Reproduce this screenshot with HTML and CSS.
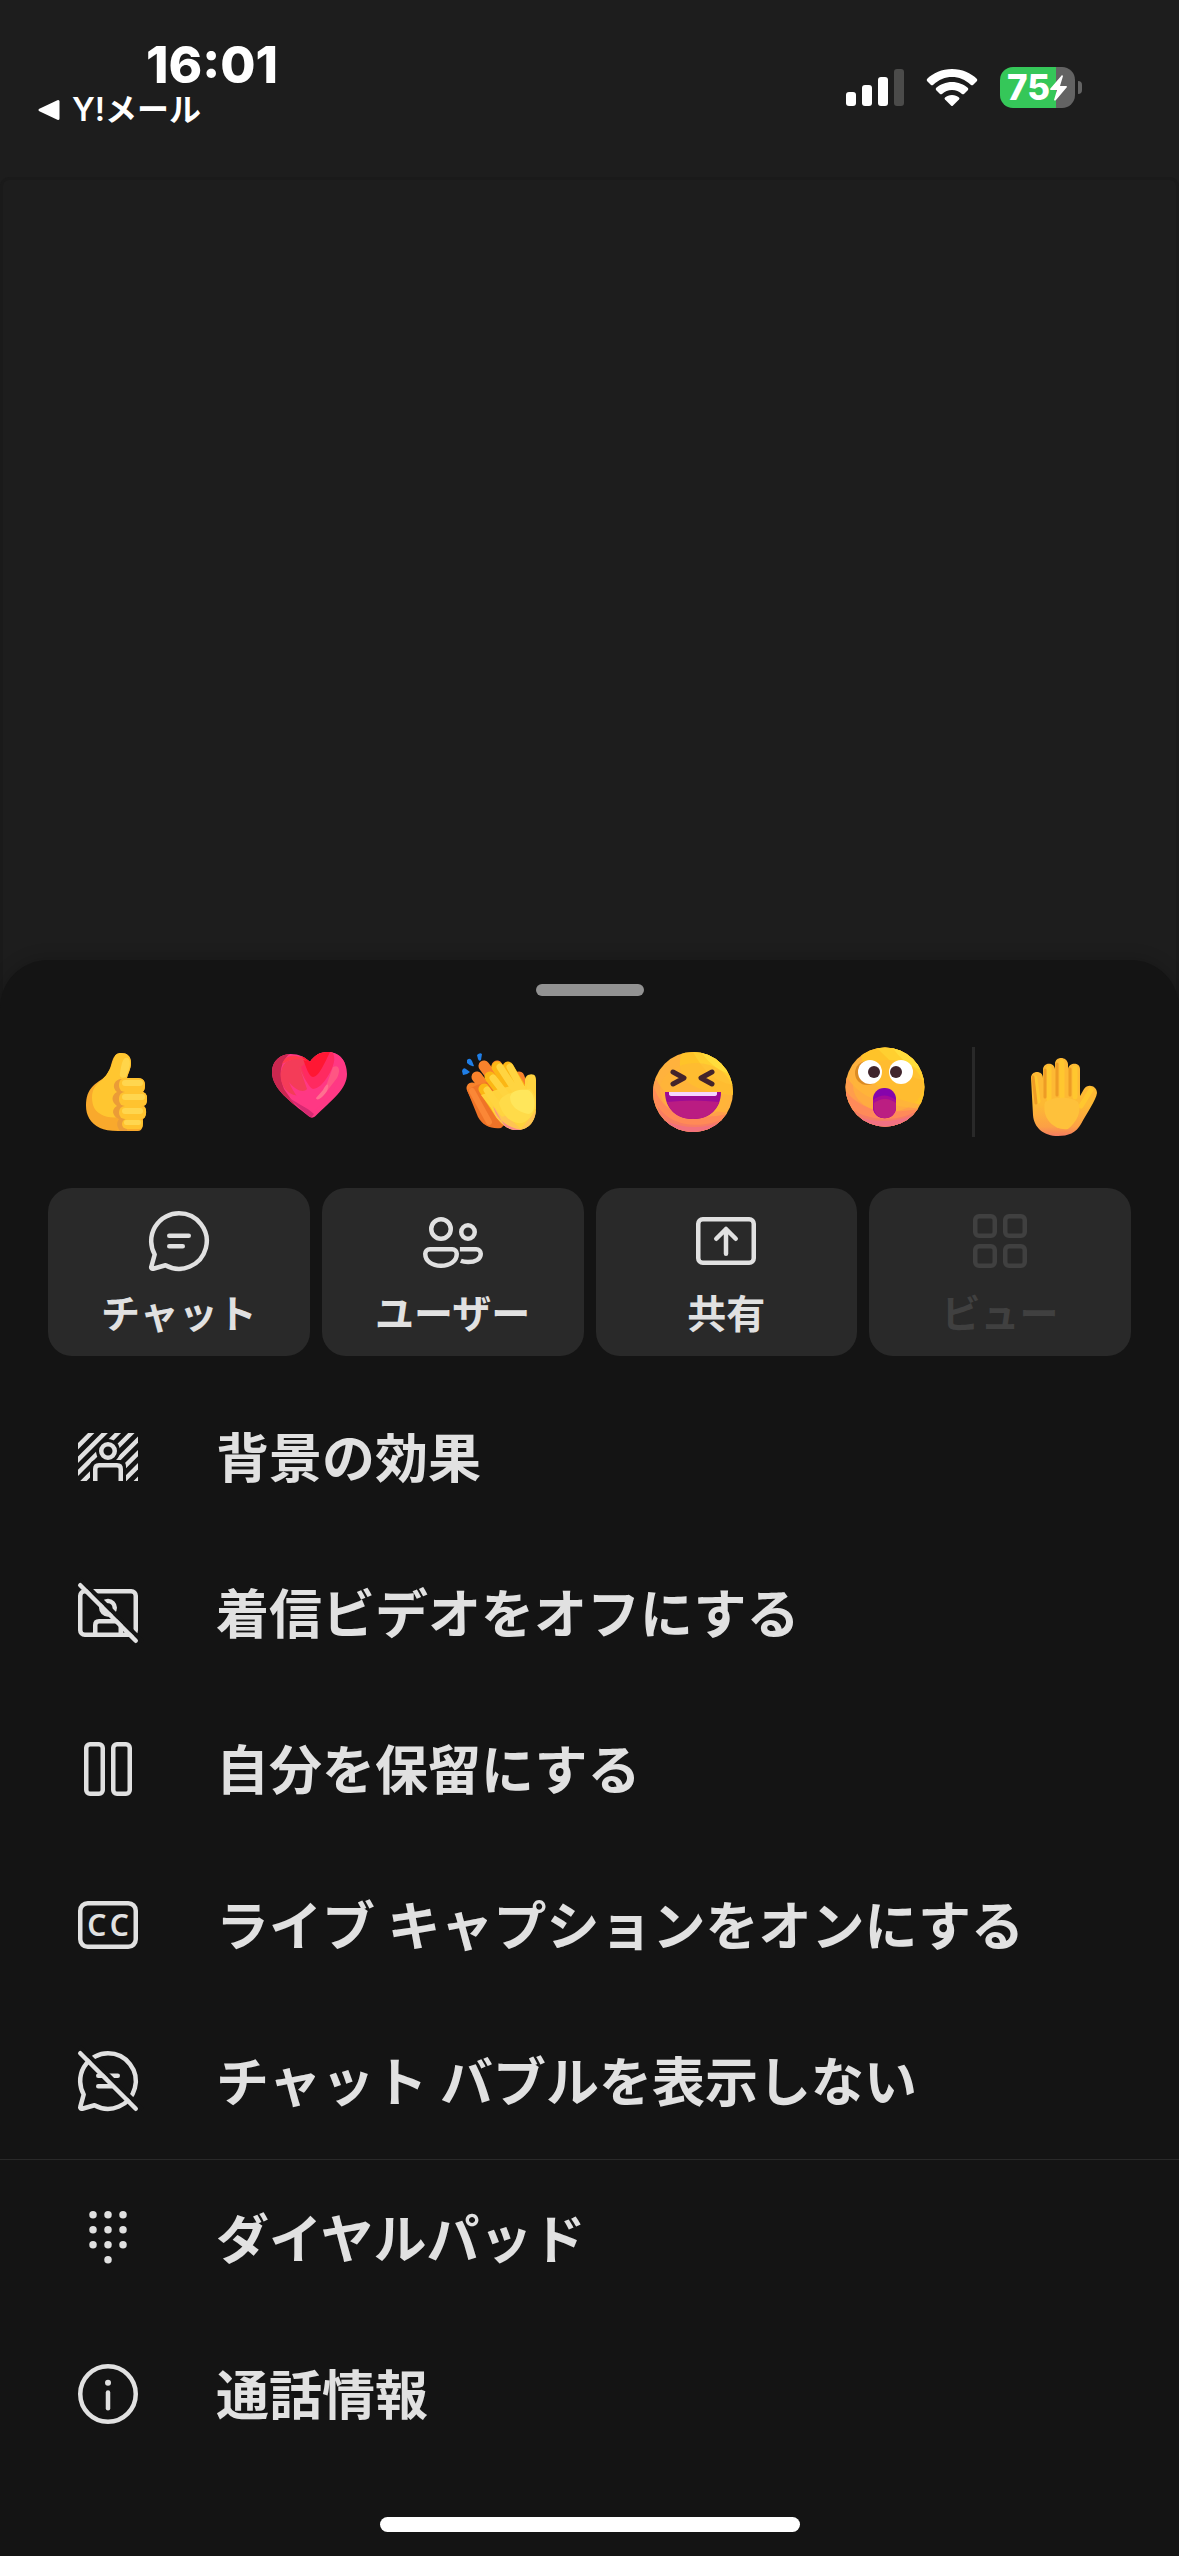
FILE: index.html
```
<!DOCTYPE html>
<html lang="ja">
<head>
    <meta charset="UTF-8">
    <meta name="viewport" content="width=device-width, initial-scale=1.0">
    <title>会議メニュー</title>
    <link rel="stylesheet" href="styles.css">
</head>
<body>
    <div class="screen">
        <header class="status-bar">
            <div class="status-left">
                <span class="time">16:01</span>
                <a href="#" class="back">
                    <svg width="22" height="22" viewBox="0 0 22 22" aria-hidden="true"><path d="M2 11 20 2.5V19.5Z" fill="#fff" stroke="#fff" stroke-width="3" stroke-linejoin="round"/></svg>
                    Y!メール
                </a>
            </div>
            <div class="status-right">
                <svg width="58" height="38" viewBox="0 0 58 38" fill="#fff" aria-hidden="true">
                    <rect y="23" width="10" height="14" rx="3"/>
                    <rect x="16" y="16" width="10" height="21" rx="3"/>
                    <rect x="32" y="8" width="10" height="29" rx="3"/>
                    <rect x="48" width="10" height="37" rx="3" fill="#4b4b4a"/>
                </svg>
                <svg width="52" height="38" viewBox="0 0 52 38" fill="#fff" aria-hidden="true">
                    <path d="M26 0C36 0 45 4 51 10Q51.5 11 51 12L47 16Q46 16.5 45 16C39 10.5 33 8 26 8S13 10.5 7 16Q6 16.5 5 16L1 12Q.5 11 1 10C7 4 16 0 26 0Z"/>
                    <path d="M26 13C32 13 38 15.5 42 19Q42.5 20 42 21L38 25Q37 25.5 36 25C33 22.5 30 21 26 21S19 22.5 16 25Q15 25.5 14 25L10 21Q9.5 20 10 19C14 15.5 20 13 26 13Z"/>
                    <path d="M26 26C29 26 31 27 33 28.5Q34 29.5 33 30.5L27 36.5Q26 37.5 25 36.5L19 30.5Q18 29.5 19 28.5C21 27 23 26 26 26Z"/>
                </svg>
                <div class="battery">
                    <span class="battery-level">75</span>
                    <svg width="17" height="26" viewBox="0 0 17 26" aria-hidden="true"><path d="M12 0 0 14Q0 15 1 15H7L4 25Q5 26 6 25L17 12Q17 11 16 11H10L13 1Z" fill="#fff"/></svg>
                </div>
            </div>
        </header>

        <main class="stage"></main>

        <section class="sheet">
            <div class="grabber"></div>

            <div class="reactions">
                <div class="reaction-list">
                    <button type="button" aria-label="いいね">
                        <svg viewBox="0 0 96 90">
                            <clipPath id="thumb"><path d="M53 6C59 6 63 9 63 16C63 22 60 26 59 31H70C75 31 77 34 77 38C77 42 76 44 75 45C78 46 79 48 79 52C79 56 78 58 76 59C79 61 79 70 75 72C75 78 75 84 70 84H50C42 84 36 83 32 81C22 76 18 68 18 59C18 50 20 44 25 39C30 34 36 32 39 27C43 21 43 17 45 12C47 8 49 6 53 6Z"/></clipPath>
                            <g clip-path="url(#thumb)">
                                <path d="M0 0H96V90H0Z" fill="#f9a92c"/>
                                <path d="M50 0H70L62 31 80 50 52 70C40 72 28 68 25 58C22 46 26 38 34 33L42 22Z" fill="#ffc630"/>
                                <path d="M52 32C45 34 44 41 49 45C43 48 43 55 49 59C43 62 44 69 51 72C48 76 49 80 52 84H59V32Z" fill="#eb9c37"/>
                                <rect x="51" y="31" width="27" height="14" rx="6" fill="#ffc32f"/>
                                <rect x="51" y="45" width="29" height="14" rx="6" fill="#ffc32f"/>
                                <rect x="51" y="59" width="28" height="13" rx="6" fill="#ffc32f"/>
                                <rect x="54" y="72" width="22" height="10" rx="5" fill="#ffc32f"/>
                                <path d="M57 11C62 9 63 16 61 22L58 30C54 32 51 30 52 26C53 20 54 13 57 11Z" fill="#ffd54a"/>
                                <rect x="54" y="33" width="21" height="6" rx="3" fill="#ffd64f"/>
                                <rect x="54" y="47" width="23" height="6" rx="3" fill="#ffd64f"/>
                                <rect x="54" y="61" width="21" height="6" rx="3" fill="#ffd64f"/>
                                <rect x="56" y="73" width="17" height="5" rx="2" fill="#ffd64f"/>
                            </g>
                        </svg>
                    </button>
                    <button type="button" aria-label="ハート">
                        <svg viewBox="0 0 96 90">
                            <clipPath id="heart"><path d="M49 15C53 9 58 5 67 5C79 5 86 15 86 27C86 42 71 53 54 69.5C52 71 50 71 48 69.5C30 55 11 42 11 25C11 14 19 7 30 7C38 7 44 10 49 15Z"/></clipPath>
                            <g clip-path="url(#heart)">
                                <path d="M0 0H96V90H0Z" fill="#ff3884"/>
                                <path d="M0 0H38C20 10 16 24 23 42L34 58 51 75 0 60Z" fill="#cc274f"/>
                                <path d="M25 15C18 22 18 33 24 42C30 49 39 50 44 47C50 44 55 44 60 38C67 30 70 16 72 5H50L38 10Z" fill="#f43c58"/>
                                <path d="M37 18C42 28 45 38 53 39C62 38 70 20 73 6L86 10 77 34C70 50 60 58 51 66C42 58 32 46 28 35C35 44 43 46 46 42C43 34 41 26 37 18Z" fill="#ff3884"/>
                                <path d="M70 4C76 9 73 19 67 29C62 37 58 41 52 42C47 40 44 31 40 20L49 13Z" fill="#ff2a60"/>
                                <path d="M41 9C45 20 48 30 52 30C58 30 64 15 69 5H54L49 13Z" fill="#ff1733"/>
                                <path d="M21 17C25 6 37 7 46 14C37 11 30 12 21 17Z" fill="#ff3b4c"/>
                                <path d="M72 20C78 17 80 23 76 31L66 44C62 47 62 43 65 39Z" fill="#ff5683"/>
                                <path d="M62 43C66 35 69 36 66 44C62 50 56 55 55 51Z" fill="#ff7090"/>
                                <path d="M25 49C32 54 47 61 53 67L50 71Z" fill="#d62a72"/>
                            </g>
                        </svg>
                    </button>
                    <button type="button" aria-label="拍手">
                        <svg viewBox="0 0 96 90">
                            <path d="M24 8Q27 5 29 7L28 13Q26 15 25 12ZM14 13Q17 10 19 14L21 19Q18 20 14 16ZM9 24Q10 20 13 22L17 25Q14 28 10 28Z" fill="#1f7ee6"/>
                            <path d="M31 19 45 38M44 19 58 40M24 30 42 54M19 41 34 72M66 30 71 44" stroke="#f9822b" stroke-width="11" stroke-linecap="round"/>
                            <path d="M14 43 25 70C30 79 38 82 48 81L60 70 38 34 24 38Z" fill="#ef7327"/>
                            <path d="M19 44 36 75" stroke="#fb8736" stroke-width="6" stroke-linecap="round"/>
                            <path d="M31 42 48 68M37 30 56 55M44 20 61 46M55 20 68 42" stroke="#fbb614" stroke-width="11" stroke-linecap="round"/>
                            <clipPath id="clap"><path d="M72 39V32C74 25 83 27 83 33V61C83 76 74 83 64 83C52 83 44 73 38 61L28 48 46 42 62 38Z"/></clipPath>
                            <g clip-path="url(#clap)">
                                <path d="M0 0H96V90H0Z" fill="#ffd23c"/>
                                <path d="M42 58 68 82 84 62V90H40Z" fill="#ffc452"/>
                                <path d="M40 59C45 77 60 82 71 83L58 90Z" fill="#f98c8b"/>
                            </g>
                            <path d="M34 43 50 66M40 31 60 57M47 20 64 46M57 20 69 42M79 31 76 50" stroke="#ffd440" stroke-width="7" stroke-linecap="round"/>
                            <path d="M46 56C48 46 64 44 77 42C87 50 83 72 69 76C59 78 49 68 46 56Z" fill="#ffdb49"/>
                            <path d="M57 50C58 43 69 42 75 43C83 46 84 67 75 67C65 65 57 59 57 50Z" fill="#ffe65b"/>
                        </svg>
                    </button>
                    <button type="button" aria-label="笑い">
                        <svg viewBox="0 0 96 90">
                            <clipPath id="laugh"><circle cx="47" cy="45" r="40"/></clipPath>
                            <g clip-path="url(#laugh)">
                                <path d="M0 0H96V90H0Z" fill="#ffb23d"/>
                                <path d="M36 4C28 30 42 45 88 48V0Z" fill="#ffc329"/>
                                <path d="M46 3C56 22 68 36 90 38V0Z" fill="#ffcf30"/>
                                <path d="M54 3C62 16 74 26 90 28V0Z" fill="#ffdd3c"/>
                                <path d="M5 10C8 44 26 62 88 66V90H0Z" fill="#ff9f4c"/>
                                <path d="M5 28C10 60 30 78 88 66V90H0Z" fill="#ff8a57"/>
                                <path d="M12 60C26 80 56 84 86 68V90H12Z" fill="#f87d62"/>
                                <path d="M20 74Q48 86 78 74V88H20Z" fill="#f2717d"/>
                                <ellipse cx="50" cy="43" rx="36" ry="27" fill="#ffb737" opacity=".55"/>
                            </g>
                            <path d="M27 25 38 31 27 37M66 25 55 31 66 37" fill="none" stroke="#43242b" stroke-width="5" stroke-linecap="round" stroke-linejoin="round"/>
                            <path d="M19 45H75C75 62 63 72 47 72S19 62 19 45Z" fill="#9c0b95"/>
                            <path d="M21 55Q47 52 73 55C69 66 60 72 47 72S25 66 21 55Z" fill="#ba1c82"/>
                            <path d="M23 45H71V47Q71 49 68 49H26Q23 49 23 47Z" fill="#f5d5ff"/>
                        </svg>
                    </button>
                    <button type="button" aria-label="驚き">
                        <svg viewBox="0 0 96 90">
                            <clipPath id="wow"><circle cx="47" cy="40" r="39.5"/></clipPath>
                            <g clip-path="url(#wow)">
                                <path d="M0 0H96V90H0Z" fill="#ffb13e"/>
                                <path d="M22 0C24 34 48 54 88 58V0Z" fill="#ffc329"/>
                                <path d="M38 0C56 18 70 32 90 34V0Z" fill="#ffd030"/>
                                <path d="M54 0C62 12 74 22 90 24V0Z" fill="#ffdd3c"/>
                                <path d="M0 12C12 44 30 58 88 62V90H0Z" fill="#ff9d4c"/>
                                <path d="M0 32C14 58 36 72 90 60V90H0Z" fill="#ff8a59"/>
                                <path d="M8 58C26 74 60 78 86 60V90H8Z" fill="#f67c66"/>
                                <path d="M20 70Q48 79 76 68V84H20Z" fill="#f27182"/>
                                <ellipse cx="50" cy="39" rx="35" ry="26" fill="#ffb737" opacity=".55"/>
                            </g>
                            <circle cx="29" cy="26" r="12" fill="#dc8b24"/>
                            <circle cx="32" cy="25" r="12" fill="#fff"/>
                            <circle cx="63" cy="25" r="12" fill="#fff"/>
                            <circle cx="36" cy="25" r="6" fill="#40252c"/>
                            <circle cx="58" cy="25" r="6" fill="#40252c"/>
                            <rect x="35" y="41" width="23" height="30" rx="11" fill="#8504ac"/>
                            <path d="M35 53Q46 44 58 53V60C58 75 35 75 35 60Z" fill="#a50b98"/>
                            <path d="M36 56Q47 48 58 56V60C58 75 36 75 36 60Z" fill="#bb1e82"/>
                        </svg>
                    </button>
                </div>
                <button type="button" class="raise-hand" aria-label="手を挙げる">
                    <svg viewBox="0 0 96 90">
                        <linearGradient id="palm" x1="0" y1="0" x2="0" y2="1">
                            <stop offset="0.6" stop-color="#fdb934"/>
                            <stop offset="0.88" stop-color="#fca045"/>
                            <stop offset="1" stop-color="#f57c60"/>
                        </linearGradient>
                        <path d="M15 31C15 23 27 23 27 31V22C28 15 38 15 39 22V17C39 9 51 9 52 17V22C53 15 64 15 64 22V49L68 42C72 36 81 39 81 46C80 53 71 66 65 77C60 86 52 89 42 89C28 89 18 81 17 68Z" fill="url(#palm)"/>
                        <path d="M19 31 22 54M33 21V52M46 15V51M59 21V50M75 43 65 59" stroke="#ffc72f" stroke-width="5" stroke-linecap="round"/>
                        <path d="M17 30 20 56M29 23V50M41 17V48M54 22V48" stroke="#ee9c25" stroke-width="3" stroke-linecap="round"/>
                        <path d="M29 55C37 50 54 49 62 55C66 64 61 75 52 82C39 84 25 72 29 55Z" fill="#fec13b"/>
                    </svg>
                </button>
            </div>

            <div class="tools">
                <button type="button" class="tool">
                    <svg class="icon" viewBox="0 0 24 24">
                        <path d="M12 2.75A9.25 9.25 0 1 1 7.5 20.08L3.4 21.24A.5 .5 0 0 1 2.76 20.6L3.9 16.5A9.25 9.25 0 0 1 12 2.75Z"/>
                        <path d="M8.75 10.25H15.25M8.75 13.75H13.25"/>
                    </svg>
                    <span>チャット</span>
                </button>
                <button type="button" class="tool">
                    <svg class="icon" viewBox="0 0 24 24">
                        <circle cx="8" cy="8" r="3.25"/>
                        <circle cx="17" cy="9" r="2.25"/>
                        <path d="M4.25 14.75H11.75C12.6 14.75 13.25 15.4 13.25 16.25C13.25 18.7 11 20.25 8 20.25S2.75 18.7 2.75 16.25C2.75 15.4 3.4 14.75 4.25 14.75Z"/>
                        <path d="M14.3 14.75H19.75C20.6 14.75 21.25 15.4 21.25 16.25C21.25 18 19.5 19 17 19C16.1 19 15.3 18.9 14.6 18.6" stroke-linecap="butt"/>
                    </svg>
                    <span>ユーザー</span>
                </button>
                <button type="button" class="tool">
                    <svg class="icon" viewBox="0 0 24 24">
                        <rect x="2.75" y="4.75" width="18.5" height="14.5" rx="1.5"/>
                        <path d="M12 16.25V8M8.75 11.25 12 8 15.25 11.25"/>
                    </svg>
                    <span>共有</span>
                </button>
                <button type="button" class="tool" disabled>
                    <svg class="icon" viewBox="0 0 24 24">
                        <rect x="3.75" y="3.75" width="6.5" height="6.5" rx="1.25"/>
                        <rect x="13.75" y="3.75" width="6.5" height="6.5" rx="1.25"/>
                        <rect x="3.75" y="13.75" width="6.5" height="6.5" rx="1.25"/>
                        <rect x="13.75" y="13.75" width="6.5" height="6.5" rx="1.25"/>
                    </svg>
                    <span>ビュー</span>
                </button>
            </div>

            <div class="menu">
                <button type="button" class="menu-item">
                    <svg class="icon" viewBox="0 0 24 24">
                        <clipPath id="frame"><path d="M2 4H22V20H2Z"/></clipPath>
                        <g clip-path="url(#frame)">
                            <path d="M-2 12.4 12.4-2M-2 16.9 16.9-2M-2 21.3 21.3-2M0 23.8 23.8 0M4 24.2 28.2 0M8 24.7 30 2.7M12 25.1 30 7.1M18 23.6 30 11.6"/>
                            <circle class="cut" cx="12" cy="10" r="4"/>
                            <rect class="cut" x="6" y="13" width="12" height="12" rx="2"/>
                            <path d="M7.75 22V16Q7.75 14.75 9 14.75H15Q16.25 14.75 16.25 16V22"/>
                        </g>
                        <circle cx="12" cy="10" r="2.25"/>
                    </svg>
                    <span>背景の効果</span>
                </button>
                <button type="button" class="menu-item">
                    <svg class="icon" viewBox="0 0 24 24">
                        <rect x="2.75" y="4.75" width="18.5" height="14.5" rx="1.5"/>
                        <circle cx="12" cy="10.25" r="2.25"/>
                        <path d="M7.75 19V16Q7.75 14.75 9 14.75H15Q16.25 14.75 16.25 16V19"/>
                        <path class="gap" d="M3 1 23 21"/>
                        <path d="M2.75 2.75 21.25 21.25"/>
                    </svg>
                    <span>着信ビデオをオフにする</span>
                </button>
                <button type="button" class="menu-item">
                    <svg class="icon" viewBox="0 0 24 24">
                        <rect x="4.75" y="3.75" width="5.5" height="16.5" rx="1.25"/>
                        <rect x="13.75" y="3.75" width="5.5" height="16.5" rx="1.25"/>
                    </svg>
                    <span>自分を保留にする</span>
                </button>
                <button type="button" class="menu-item">
                    <svg class="icon" viewBox="0 0 24 24">
                        <rect x="2.75" y="4.75" width="18.5" height="14.5" rx="2.5"/>
                        <text class="cc" x="5.1 12.6" y="15.6">CC</text>
                    </svg>
                    <span>ライブ キャプションをオンにする</span>
                </button>
                <button type="button" class="menu-item">
                    <svg class="icon" viewBox="0 0 24 24">
                        <path d="M12 2.75A9.25 9.25 0 1 1 7.5 20.08L3.4 21.24A.5 .5 0 0 1 2.76 20.6L3.9 16.5A9.25 9.25 0 0 1 12 2.75Z"/>
                        <path d="M8.75 10.25H15.25M8.75 13.75H13.25"/>
                        <path class="gap" d="M3 1 23 21"/>
                        <path d="M2.75 2.75 21.25 21.25"/>
                    </svg>
                    <span>チャット バブルを表示しない</span>
                </button>
            </div>

            <div class="menu">
                <button type="button" class="menu-item">
                    <svg class="icon icon-filled" viewBox="0 0 24 24">
                        <circle cx="7" cy="4.25" r="1.25"/><circle cx="12" cy="4.25" r="1.25"/><circle cx="17" cy="4.25" r="1.25"/>
                        <circle cx="7" cy="9.25" r="1.25"/><circle cx="12" cy="9.25" r="1.25"/><circle cx="17" cy="9.25" r="1.25"/>
                        <circle cx="7" cy="14.25" r="1.25"/><circle cx="12" cy="14.25" r="1.25"/><circle cx="17" cy="14.25" r="1.25"/>
                        <circle cx="12" cy="19.25" r="1.25"/>
                    </svg>
                    <span>ダイヤルパッド</span>
                </button>
                <button type="button" class="menu-item">
                    <svg class="icon" viewBox="0 0 24 24">
                        <circle cx="12" cy="12" r="9.25"/>
                        <path d="M12 11.5V16.75"/>
                        <circle class="dot" cx="12" cy="8.25" r="1"/>
                    </svg>
                    <span>通話情報</span>
                </button>
            </div>

            <div class="home-indicator"></div>
        </section>
    </div>
</body>
</html>
```
FILE: styles.css
```
* {
    box-sizing: border-box;
}

body {
    margin: 0;
    background: #1d1d1d;
    color: #e1e1e1;
    font-family: Inter, "Noto Sans CJK JP", sans-serif;
}

button {
    padding: 0;
    border: none;
    background: none;
    color: inherit;
    font: inherit;
}

svg {
    display: block;
}

.screen {
    display: flex;
    flex-direction: column;
    min-height: 100vh;
}

/* Status bar */

.status-bar {
    display: flex;
    justify-content: space-between;
    height: 177px;
    padding: 40px 97px 0 38px;
    color: #fff;
}

.status-left {
    display: flex;
    flex-direction: column;
}

.time {
    margin-left: 108px;
    font-size: 51px;
    font-weight: 800;
    line-height: 50px;
}

.back {
    display: flex;
    align-items: center;
    gap: 12px;
    color: inherit;
    font-size: 32px;
    font-weight: 600;
    line-height: 40px;
    text-decoration: none;
}

.status-right {
    display: flex;
    align-items: flex-start;
    gap: 22px;
    padding-top: 29px;
}

.battery {
    display: flex;
    align-items: center;
    position: relative;
    width: 75px;
    height: 41px;
    margin: -2px 7px 0 0;
    padding-left: 7px;
    border-radius: 13px;
    background: linear-gradient(to right, #35c759 56px, #636363 56px);
}

.battery::after {
    content: "";
    position: absolute;
    right: -7px;
    top: 14px;
    width: 4px;
    height: 13px;
    border-radius: 0 4px 4px 0;
    background: #636363;
}

.battery-level {
    font-size: 35px;
    font-weight: 800;
    line-height: 41px;
}

/* Call area behind the sheet */

.stage {
    flex: 1;
    margin-bottom: -60px;
    border: 3px solid #1a1a1a;
    border-radius: 9px;
}

/* Bottom sheet */

.sheet {
    position: relative;
    padding: 24px 0;
    border-radius: 48px 48px 0 0;
    background: #141414;
    box-shadow: 0 0 18px rgba(0, 0, 0, 0.2);
}

.grabber {
    width: 108px;
    height: 12px;
    margin: 0 auto;
    border-radius: 6px;
    background: #929292;
}

.reactions {
    display: flex;
    margin: 51px 67px 51px 68px;
}

.reaction-list {
    flex: 1;
    display: flex;
    justify-content: space-between;
}

.reactions svg {
    width: 96px;
    height: 90px;
    fill: none;
}

.raise-hand {
    margin-left: 38px;
    padding-left: 41px;
    border-left: 3px solid #292929;
}

.tools {
    display: grid;
    grid-template-columns: repeat(4, 1fr);
    gap: 12px;
    margin-bottom: 23px;
    padding: 0 48px;
}

.tool {
    display: flex;
    flex-direction: column;
    align-items: center;
    height: 168px;
    padding-top: 17px;
    border-radius: 24px;
    background: #292929;
    font-size: 39px;
    font-weight: 700;
    line-height: 74px;
}

.tool:disabled {
    color: #404040;
}

.icon {
    flex: none;
    width: 72px;
    height: 72px;
    fill: none;
    stroke: currentColor;
    stroke-width: 1.5;
    stroke-linecap: round;
    stroke-linejoin: round;
}

.icon-filled,
.icon .dot {
    fill: currentColor;
    stroke: none;
}

.icon .cut {
    fill: #141414;
    stroke: none;
}

.icon .gap {
    stroke: #141414;
}

.cc {
    fill: currentColor;
    stroke: none;
    font-family: "Noto Sans", sans-serif;
    font-size: 10px;
    font-weight: 600;
}

.menu + .menu {
    border-top: 1px solid #292929;
}

.menu-item {
    display: flex;
    align-items: center;
    gap: 72px;
    width: 100%;
    height: 156px;
    padding: 0 72px;
    font-size: 53px;
    font-weight: 700;
    text-align: left;
}

.menu-item span {
    padding-bottom: 4px;
}

.home-indicator {
    width: 420px;
    height: 15px;
    margin: 45px auto 0;
    border-radius: 8px;
    background: #fff;
}
```
